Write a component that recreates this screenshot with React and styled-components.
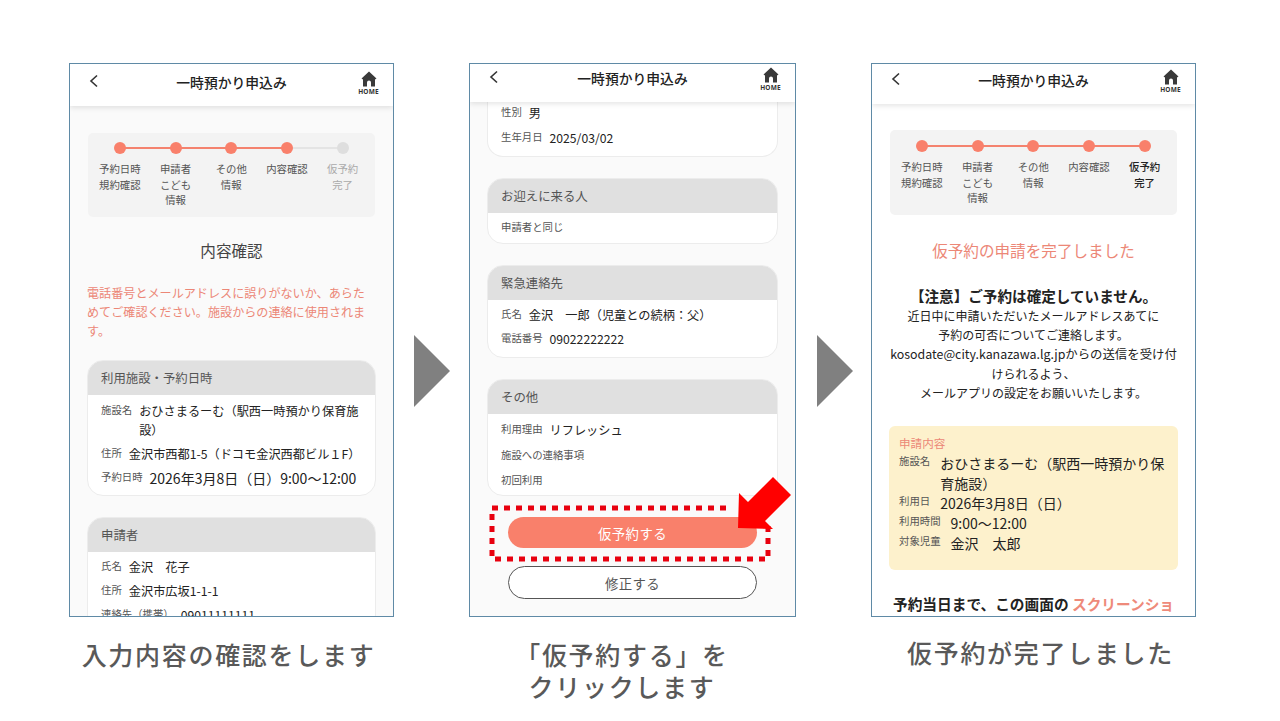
import React from 'react'
import styled, { createGlobalStyle } from 'styled-components'

const GlobalStyle = createGlobalStyle`
  html, body { margin: 0; padding: 0; background: #fff; }
  body {
    width: 1280px;
    height: 721px;
    overflow: hidden;
    font-family: "Noto Sans CJK JP", "Noto Sans", sans-serif;
    color: #222;
  }
`

const Slide = styled.div`
  display: flex;
  align-items: flex-start;
  padding: 63px 0 0 69px;
`

const Column = styled.div`
  width: ${p => p.$width}px;
  flex: none;
`

const Chevron = styled.div`
  flex: none;
  width: 36px;
  height: 72px;
  margin: 272px ${p => p.$right}px 0 ${p => p.$left}px;
  background: #808080;
  clip-path: polygon(0 0, 100% 50%, 0 100%);
`

const Phone = styled.div`
  position: relative;
  height: 554px;
  box-sizing: border-box;
  border: 1px solid #5f8aa6;
  background: ${p => p.$bg};
  overflow: hidden;
  display: flex;
  flex-direction: column;
`

const Header = styled.header`
  flex: none;
  height: ${p => p.$height}px;
  box-sizing: border-box;
  padding-bottom: ${p => p.$lift}px;
  display: grid;
  grid-template-columns: 50px 1fr 50px;
  align-items: center;
  background: #fff;
  box-shadow: 0 2px 5px rgba(0, 0, 0, 0.1);
  position: relative;
  z-index: 1;
`

const Back = styled.svg`
  width: 10px;
  height: 14px;
  margin-left: 19px;
  margin-top: -5px;
`

const HeaderTitle = styled.div`
  text-align: center;
  font-size: 13.8px;
  font-weight: 500;
  color: #222;
  margin-top: -3px;
`

const Home = styled.div`
  display: flex;
  flex-direction: column;
  align-items: center;
  padding-left: 1px;
  svg { width: 16px; height: 16px; display: block; }
  span {
    font-family: "Noto Sans", sans-serif;
    font-size: 6.5px;
    line-height: 9px;
    font-weight: 700;
    color: #333;
    letter-spacing: 0.2px;
  }
`

const Body = styled.div`
  flex: 1;
  min-height: 0;
  padding: ${p => p.$top}px 17px 0 17px;
`

const Stepper = styled.div`
  display: flex;
  height: ${p => 75 + p.$pad}px;
  box-sizing: border-box;
  margin: 0 1px;
  padding: ${p => p.$pad}px 4px 0;
  background: #f3f3f3;
  border-radius: 5px;
`

const Step = styled.div`
  position: relative;
  width: 55.7px;
  flex: none;
  text-align: center;
  font-size: 10.4px;
  line-height: 15.6px;
  color: ${p => (p.$muted ? '#aaa' : p.$current ? '#222' : '#555')};
  font-weight: ${p => (p.$current ? 500 : 400)};
  &::before {
    content: "";
    display: ${p => (p.$first ? 'none' : 'block')};
    position: absolute;
    top: 5px;
    left: -50%;
    width: 100%;
    height: 2px;
    background: ${p => (p.$muted ? '#e4e4e4' : '#f4826e')};
  }
`

const Dot = styled.span`
  position: relative;
  z-index: 1;
  display: block;
  width: 12px;
  height: 12px;
  margin: 0 auto 7px;
  border-radius: 50%;
  background: ${p => (p.$muted ? '#dedede' : '#f9806b')};
`

const PageTitle = styled.h2`
  margin: ${p => p.$top}px 0 0;
  text-align: center;
  font-size: 15.6px;
  line-height: 24px;
  font-weight: 400;
  color: ${p => p.$color};
`

const Notice = styled.p`
  margin: 21px 0 20px;
  font-size: 12.1px;
  line-height: 19px;
  color: #ec8777;
`

const Card = styled.section`
  background: #fff;
  border: 1px solid #ececec;
  border-top: ${p => (p.$open ? 'none' : '1px solid #ececec')};
  border-radius: ${p => (p.$open ? '0 0 16px 16px' : '16px')};
  margin-bottom: 21px;
  overflow: hidden;
  box-sizing: border-box;
  margin-top: ${p => (p.$open ? '-1px' : '0')};
  height: ${p => (p.$height ? `${p.$height}px` : 'auto')};
`

const CardTitle = styled.h3`
  margin: 0;
  height: 34px;
  padding-left: 13px;
  background: #e0e0e0;
  font-size: 12.4px;
  line-height: 35px;
  font-weight: 400;
  color: #555;
`

const CardBody = styled.div`
  padding: ${p => p.$top}px 14px 0 13px;
`

const Row = styled.div`
  display: flex;
  gap: 7px;
  margin-bottom: ${p => p.$after || 5}px;
`

const Label = styled.span`
  flex: none;
  font-size: 10.4px;
  line-height: 19px;
  color: #555;
  margin-top: -2px;
`

const Value = styled.span`
  font-size: ${p => p.$size || 12.2}px;
  line-height: ${p => p.$leading || 19}px;
  color: #222;
`

const Plain = styled.div`
  font-size: 10.4px;
  line-height: 19px;
  color: #555;
  margin-bottom: 6px;
`

const Button = styled.button`
  display: block;
  width: 249px;
  height: ${p => p.$height}px;
  margin: 0 auto ${p => p.$after}px;
  padding: 0;
  border-radius: 17px;
  font: inherit;
  font-size: 13.4px;
  letter-spacing: 0.4px;
  color: ${p => (p.$primary ? '#fff' : '#555')};
  background: ${p => (p.$primary ? '#f9806b' : '#fff')};
  border: ${p => (p.$primary ? 'none' : '1px solid #555')};
`

const DottedFrame = styled.svg`
  position: absolute;
  left: 18px;
  top: 440px;
  width: 284px;
  height: 64px;
  z-index: 2;
`

const RedArrow = styled.svg`
  position: absolute;
  left: 260px;
  top: 405px;
  width: 70px;
  height: 70px;
  z-index: 3;
`

const Lead = styled.div`
  margin: 23px -1px 0;
  text-align: center;
  font-size: 12px;
  line-height: 19px;
  color: #222;
  white-space: nowrap;
  strong {
    display: block;
    font-size: 14.6px;
    font-weight: 700;
    line-height: 21px;
  }
  b {
    font-weight: 400;
    font-size: 12.4px;
  }
`

const Summary = styled.div`
  margin: 24px 0 0;
  height: 144px;
  box-sizing: border-box;
  padding: 9px 10px 0;
  background: #fdf1cc;
  border-radius: 6px;
`

const SummaryTitle = styled.div`
  font-size: 11.6px;
  line-height: 17px;
  color: #ec8777;
  margin-bottom: 1px;
`

const SummaryRow = styled.div`
  display: flex;
  gap: 10px;
`

const Reminder = styled.div`
  margin: 24px -4px 0;
  text-align: center;
  white-space: nowrap;
  font-size: 14.7px;
  line-height: 20px;
  font-weight: 700;
  color: #222;
  span { color: #ee8a7a; }
`

const Caption = styled.div`
  margin-top: ${p => p.$top}px;
  padding-right: ${p => p.$shift || 0}px;
  padding-left: ${p => p.$pushLeft || 0}px;
  text-align: center;
  font-size: 25px;
  line-height: 32px;
  font-weight: 500;
  letter-spacing: 1.7px;
  color: #595959;
  white-space: nowrap;
`

const steps = [
  ['予約日時', '規約確認'],
  ['申請者', 'こども', '情報'],
  ['その他', '情報'],
  ['内容確認'],
  ['仮予約', '完了'],
]

function TopBar({ height, lift }) {
  return (
    <Header $height={height} $lift={lift}>
      <Back viewBox="0 0 10 14" fill="none" stroke="#333" strokeWidth="1.6">
        <path d="M8 1.5 2 7l6 5.5" />
      </Back>
      <HeaderTitle>一時預かり申込み</HeaderTitle>
      <Home>
        <svg viewBox="0 0 16 16">
          <path
            fill="#3a3a3a"
            d="M8 0.5 0.5 7.5 2 8.5V15.5H6V11.5a2 2 0 0 1 4 0V15.5H14V8.5L15.5 7.5Z"
          />
        </svg>
        <span>HOME</span>
      </Home>
    </Header>
  )
}

function Progress({ doneCount, pad }) {
  return (
    <Stepper $pad={pad}>
      {steps.map((lines, i) => {
        const muted = i >= doneCount
        return (
          <Step key={i} $first={i === 0} $muted={muted} $current={doneCount === 5 && i === 4}>
            <Dot $muted={muted} />
            {lines.map(line => <div key={line}>{line}</div>)}
          </Step>
        )
      })}
    </Stepper>
  )
}

export default function App() {
  return (
    <Slide>
      <GlobalStyle />

      <Column $width={325}>
        <Phone $bg="#fafafa">
          <TopBar height={42} lift={4} />
          <Body $top={27}>
            <Progress doneCount={4} pad={9} />
            <PageTitle $top={21} $color="#444">内容確認</PageTitle>
            <Notice>電話番号とメールアドレスに誤りがないか、あらためてご確認ください。施設からの連絡に使用されます。</Notice>
            <Card>
              <CardTitle>利用施設・予約日時</CardTitle>
              <CardBody $top={7}>
                <Row><Label>施設名</Label><Value>おひさまるーむ（駅西一時預かり保育施設）</Value></Row>
                <Row><Label>住所</Label><Value>金沢市西都1-5（ドコモ金沢西都ビル１F）</Value></Row>
                <Row $after={7}><Label>予約日時</Label><Value $size={14}>2026年3月8日（日）9:00〜12:00</Value></Row>
              </CardBody>
            </Card>
            <Card>
              <CardTitle>申請者</CardTitle>
              <CardBody $top={6}>
                <Row><Label>氏名</Label><Value>金沢　花子</Value></Row>
                <Row><Label>住所</Label><Value>金沢市広坂1-1-1</Value></Row>
                <Row><Label>連絡先（携帯）</Label><Value>09011111111</Value></Row>
              </CardBody>
            </Card>
          </Body>
        </Phone>
        <Caption $top={21} $shift={6}>入力内容の確認をします</Caption>
      </Column>

      <Chevron $left={20} $right={19} />

      <Column $width={327}>
        <Phone $bg="#fafafa">
          <TopBar height={38} lift={8} />
          <Body $top={0}>
            <Card $open $height={56}>
              <CardBody $top={3}>
                <Row $after={6}><Label>性別</Label><Value>男</Value></Row>
                <Row><Label>生年月日</Label><Value>2025/03/02</Value></Row>
              </CardBody>
            </Card>
            <Card $height={66}>
              <CardTitle>お迎えに来る人</CardTitle>
              <CardBody $top={4}>
                <Plain>申請者と同じ</Plain>
              </CardBody>
            </Card>
            <Card $height={93}>
              <CardTitle>緊急連絡先</CardTitle>
              <CardBody $top={6}>
                <Row><Label>氏名</Label><Value>金沢　一郎（児童との続柄：父）</Value></Row>
                <Row><Label>電話番号</Label><Value>09022222222</Value></Row>
              </CardBody>
            </Card>
            <Card $height={117}>
              <CardTitle>その他</CardTitle>
              <CardBody $top={7}>
                <Row $after={5}><Label>利用理由</Label><Value>リフレッシュ</Value></Row>
                <Plain>施設への連絡事項</Plain>
                <Plain>初回利用</Plain>
              </CardBody>
            </Card>
            <Button $primary $height={31} $after={18}>仮予約する</Button>
            <Button $height={33} $after={0}>修正する</Button>
          </Body>
          <DottedFrame viewBox="0 0 284 64">
            <path d="M280 22V55H4V4H243" fill="none" stroke="#e8000f" strokeWidth="5" strokeDasharray="6 6" />
          </DottedFrame>
          <RedArrow viewBox="0 0 70 70">
            <polygon fill="#ff0000" points="8,59 9,24 18,33 43,8 61,26 35,52 43,60" />
          </RedArrow>
        </Phone>
        <Caption $top={21} $shift={21}>「仮予約する」を<br />クリックします</Caption>
      </Column>

      <Chevron $left={21} $right={18} />

      <Column $width={325}>
        <Phone $bg="#fff">
          <TopBar height={40} lift={6} />
          <Body $top={26}>
            <Progress doneCount={5} pad={10} />
            <PageTitle $top={23} $color="#ec8777">仮予約の申請を完了しました</PageTitle>
            <Lead>
              <strong>【注意】ご予約は確定していません。</strong>
              近日中に申請いただいたメールアドレスあてに<br />
              予約の可否についてご連絡します。<br />
              <b>kosodate@city.kanazawa.lg.jpからの送信を受け付</b><br />
              けられるよう、<br />
              メールアプリの設定をお願いいたします。
            </Lead>
            <Summary>
              <SummaryTitle>申請内容</SummaryTitle>
              <SummaryRow><Label>施設名</Label><Value $size={14} $leading={20}>おひさまるーむ（駅西一時預かり保育施設）</Value></SummaryRow>
              <SummaryRow><Label>利用日</Label><Value $size={14} $leading={20}>2026年3月8日（日）</Value></SummaryRow>
              <SummaryRow><Label>利用時間</Label><Value $size={14} $leading={20}>9:00〜12:00</Value></SummaryRow>
              <SummaryRow><Label>対象児童</Label><Value $size={14} $leading={20}>金沢　太郎</Value></SummaryRow>
            </Summary>
            <Reminder>予約当日まで、この画面の <span>スクリーンショ</span></Reminder>
          </Body>
        </Phone>
        <Caption $top={19} $pushLeft={14}>仮予約が完了しました</Caption>
      </Column>
    </Slide>
  )
}
